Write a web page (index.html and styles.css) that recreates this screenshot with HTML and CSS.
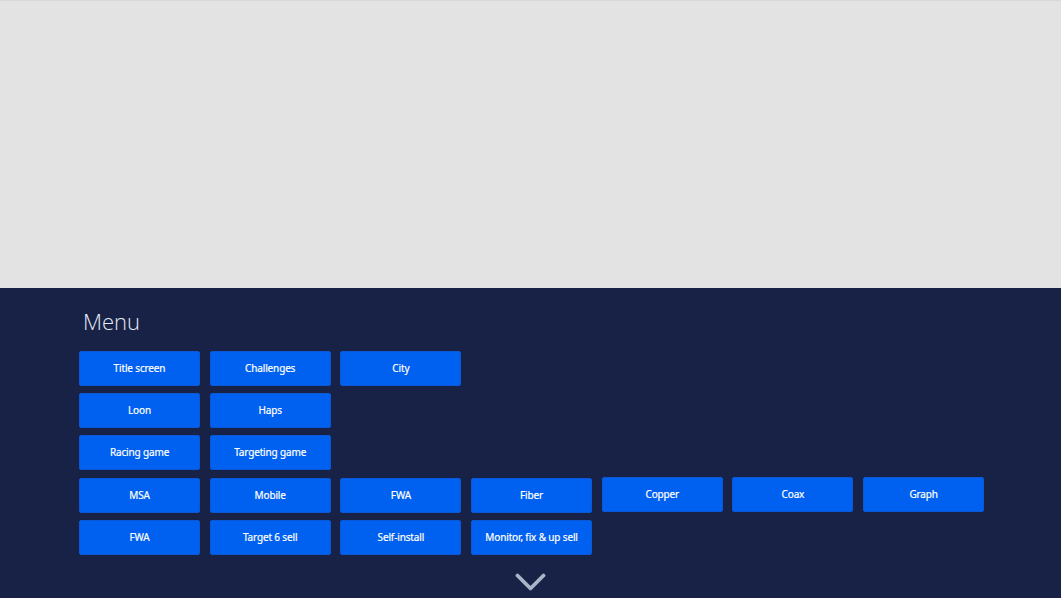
FILE: index.html
```html
<!DOCTYPE html>
<html>
<head>
<meta charset="utf-8">
<link rel="stylesheet" href="styles.css">
</head>
<body>
<div class="stage"></div>
<div class="menu-panel">
  <h1 class="menu-title">Menu</h1>
  <div class="rows">
    <div class="row">
      <button class="btn">Title screen</button>
      <button class="btn">Challenges</button>
      <button class="btn">City</button>
    </div>
    <div class="row">
      <button class="btn">Loon</button>
      <button class="btn">Haps</button>
    </div>
    <div class="row">
      <button class="btn">Racing game</button>
      <button class="btn">Targeting game</button>
    </div>
    <div class="row row-shift">
      <button class="btn">MSA</button>
      <button class="btn">Mobile</button>
      <button class="btn">FWA</button>
      <button class="btn">Fiber</button>
      <button class="btn btn-up">Copper</button>
      <button class="btn btn-up">Coax</button>
      <button class="btn btn-up">Graph</button>
    </div>
    <div class="row">
      <button class="btn">FWA</button>
      <button class="btn">Target 6 sell</button>
      <button class="btn">Self-install</button>
      <button class="btn">Monitor, fix &amp; up sell</button>
    </div>
  </div>
  <div class="chevron-wrap">
    <svg class="chevron" width="31" height="19" viewBox="0 0 31 19">
      <path d="M2.5 2.5 L15.5 15.5 L28.5 2.5" fill="none" stroke="#aab4c7" stroke-width="3.8" stroke-linecap="round" stroke-linejoin="round"/>
    </svg>
  </div>
</div>
</body>
</html>
```

FILE: styles.css
```css
html, body {
  margin: 0;
  padding: 0;
  height: 100%;
  overflow: hidden;
}
body {
  font-family: "Noto Sans", "Open Sans", sans-serif;
  background: #172246;
}
.stage {
  height: 287px;
  background: #e3e3e3;
  border-top: 1px solid #d8d8d8;
}
.menu-panel {
  background: #172246;
  height: 310px;
  padding-left: 79px;
  box-sizing: border-box;
}
.menu-title {
  margin: 0;
  padding: 18px 0 0 4px;
  height: 63px;
  box-sizing: border-box;
  font-family: "Open Sans", sans-serif;
  font-weight: 300;
  font-size: 22px;
  line-height: 30px;
  color: #e4e9f6;
}
.rows {
  display: flex;
  flex-direction: column;
  gap: 7px;
}
.row {
  display: flex;
  gap: 9.7px;
  align-items: flex-start;
}
.row-shift {
  margin-top: 1px;
}
.btn {
  width: 121px;
  height: 35px;
  margin: 0;
  padding: 0;
  border: 1px solid #0b58d6;
  border-radius: 2px;
  background: #0060ef;
  color: #ffffff;
  font-family: "Noto Sans", sans-serif;
  font-size: 10px;
  line-height: 33px;
  letter-spacing: -0.15px;
  -webkit-text-stroke: 0.2px #ffffff;
  text-align: center;
  white-space: nowrap;
}
.btn-up {
  margin-top: -1px;
}
.chevron-wrap {
  display: flex;
  justify-content: center;
  padding-top: 18px;
  padding-right: 79px;
}
.chevron {
  display: block;
}
```
